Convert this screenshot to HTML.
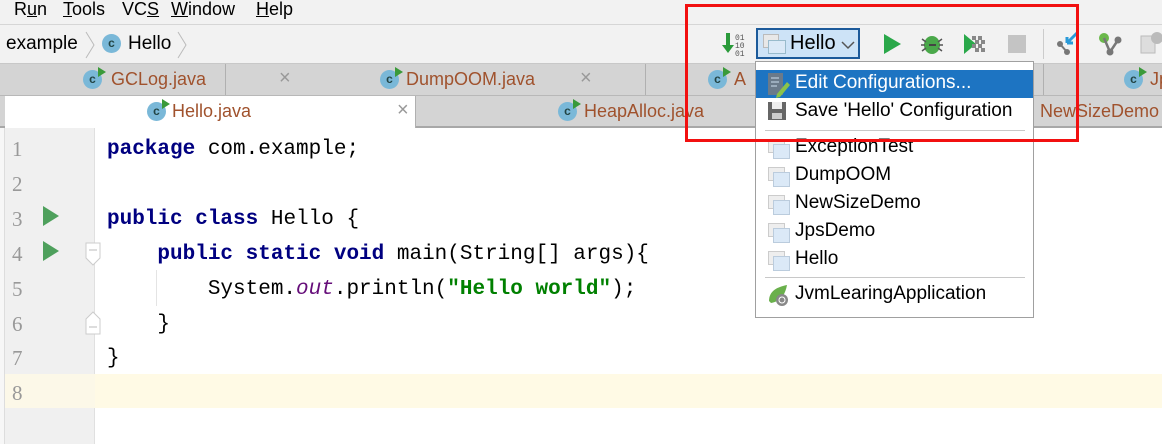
<!DOCTYPE html>
<html><head><meta charset="utf-8">
<style>
*{margin:0;padding:0;box-sizing:border-box}
body{width:1162px;height:444px;overflow:hidden;background:#fff;font-family:"Liberation Sans","Noto Sans CJK SC",sans-serif;position:relative;color:#000}
.abs{position:absolute}
.menu{top:0;left:0;width:1162px;height:25px;background:#f2f2f2;border-bottom:1px solid #d6d6d6;font-size:18px}
.menu span{position:absolute;top:-1px}
.nav{top:25px;left:0;width:1162px;height:39px;background:#f2f2f2;border-bottom:1px solid #c8c8c8}
.cicon{display:inline-block;width:19px;height:19px;border-radius:50%;background:#7ab8d8;color:#244;font-size:12px;text-align:center;line-height:19px;font-weight:bold;position:relative}
.cicon.run::after{content:"";position:absolute;right:-4px;top:-3px;border-left:8px solid #3a9a3a;border-top:5px solid transparent;border-bottom:5px solid transparent}
.tabs1{top:64px;left:0;width:1162px;height:32px;background:#d4d4d4;border-bottom:1px solid #b8b8b8}
.tabs2{top:96px;left:0;width:1162px;height:32px;background:#d4d4d4;border-bottom:2px solid #a8a8a8}
.tab{position:absolute;top:0;height:31px;border-right:1px solid #b0b0b0;font-size:18px;color:#a0522d}
.tab .lbl{position:absolute;top:5px}
.tab .x{position:absolute;top:3px;color:#999;font-size:20px}
.gutter{top:128px;left:0;width:95px;height:316px;background:#f0f0f0;border-right:1px solid #e0e0e0}
.ln{position:absolute;left:12px;font-family:"Liberation Serif",serif;font-size:21px;color:#999}
.code{font-family:"Liberation Mono",monospace;font-size:21px;position:absolute;white-space:pre;color:#000}
.kw{color:#000080;font-weight:bold}
.str{color:#008000;font-weight:bold}
.fld{color:#660e7a;font-style:italic}
.play{position:absolute;left:43px;border-left:16px solid #4ea05c;border-top:10px solid transparent;border-bottom:10px solid transparent}
.popup{top:61px;left:755px;width:279px;height:257px;background:#fff;border:1px solid #a0a0a0;font-size:19px}
.item{position:absolute;left:0;width:277px;height:28px}
.item .t{position:absolute;left:39px;top:2px}
.cfg{position:absolute;left:12px;top:5px;width:20px;height:18px}
.cfg::before{content:"";position:absolute;left:0;top:0;width:15px;height:12px;border:1px solid #ccc;background:#eee}
.cfg::after{content:"";position:absolute;left:5px;top:5px;width:15px;height:13px;border:1px solid #bcd;background:#dbe9f7}
.sep{position:absolute;left:9px;width:260px;height:1px;background:#c8c8c8}
</style></head><body>
<div class="abs menu">
 <span style="left:14px">R<u>u</u>n</span>
 <span style="left:63px"><u>T</u>ools</span>
 <span style="left:122px">VC<u>S</u></span>
 <span style="left:171px"><u>W</u>indow</span>
 <span style="left:256px"><u>H</u>elp</span>
</div>
<div class="abs nav">
 <span class="abs" style="left:6px;top:8px;font-size:19px">example</span>
 <svg class="abs" style="left:84px;top:6px" width="12" height="28"><path d="M2 1 L10 14 L2 27" fill="none" stroke="#bbb"/></svg>
 <span class="abs cicon" style="left:102px;top:9px">c</span>
 <span class="abs" style="left:128px;top:8px;font-size:19px">Hello</span>
 <svg class="abs" style="left:176px;top:6px" width="12" height="28"><path d="M2 1 L10 14 L2 27" fill="none" stroke="#bbb"/></svg>
 <svg class="abs" style="left:720px;top:6px" width="28" height="26"><path d="M8 2v16" stroke="#2a9a3a" stroke-width="4"/><path d="M2 14l6 8 6-8z" fill="#2a9a3a"/><text x="15" y="9" font-size="8" font-family="Liberation Mono" fill="#555">01</text><text x="15" y="17" font-size="8" font-family="Liberation Mono" fill="#555">10</text><text x="15" y="25" font-size="8" font-family="Liberation Mono" fill="#555">01</text></svg>
 <div class="abs" style="left:756px;top:3px;width:104px;height:31px;background:#cde3f7;border:2px solid #1c5a9a">
  <div class="abs" style="left:5px;top:4px;width:16px;height:14px;border:1px solid #bbb;background:#e8e8e8"></div>
  <div class="abs" style="left:10px;top:10px;width:18px;height:14px;border:1px solid #9bc;background:#dbe9f7"></div>
  <span class="abs" style="left:32px;top:2px;font-size:20px">Hello</span>
  <svg class="abs" style="left:83px;top:10px" width="14" height="10"><path d="M1 2l6 6 6-6" fill="none" stroke="#555" stroke-width="1.5"/></svg>
 </div>
 <svg class="abs" style="left:882px;top:8px" width="20" height="22"><path d="M2 1L19 11L2 21z" fill="#2aa84a"/></svg>
 <svg class="abs" style="left:919px;top:6px" width="26" height="26"><ellipse cx="13" cy="14" rx="8" ry="9" fill="#4aa84a"/><path d="M10 14h7" stroke="#444" stroke-width="2"/><path d="M3 8l4 3M3 20l4-3M23 8l-4 3M23 20l-4-3M2 14h4M20 14h4" stroke="#555" stroke-width="1.5"/></svg>
 <svg class="abs" style="left:962px;top:8px" width="26" height="22"><path d="M2 1L14 11L2 21z" fill="#2aa84a"/><g fill="#888"><rect x="10" y="3" width="4" height="4"/><rect x="16" y="3" width="4" height="4"/><rect x="13" y="7" width="4" height="4"/><rect x="19" y="7" width="4" height="4"/><rect x="10" y="11" width="4" height="4"/><rect x="16" y="11" width="4" height="4"/><rect x="13" y="15" width="4" height="4"/><rect x="19" y="15" width="4" height="4"/></g></svg>
 <div class="abs" style="left:1008px;top:10px;width:18px;height:18px;background:#c4c4c4"></div>
 <div class="abs" style="left:1043px;top:4px;width:1px;height:30px;background:#ccc"></div>
 <svg class="abs" style="left:1055px;top:6px" width="26" height="26"><circle cx="5" cy="13" r="3" fill="#777"/><circle cx="12" cy="21" r="3" fill="#777"/><path d="M5 13L12 21" stroke="#777" stroke-width="2"/><path d="M22 2L12 12M12 12v-6M12 12h6" stroke="#2a9ad8" stroke-width="3" fill="none"/></svg>
 <svg class="abs" style="left:1097px;top:6px" width="28" height="26"><circle cx="7" cy="7" r="5" fill="#6ab84a"/><circle cx="21" cy="9" r="3.5" fill="#777"/><circle cx="13" cy="21" r="3.5" fill="#777"/><path d="M7 7L13 21L21 9" stroke="#777" stroke-width="2.5" fill="none"/></svg>
 <svg class="abs" style="left:1140px;top:6px" width="22" height="26"><rect x="1" y="5" width="14" height="17" fill="#ddd" stroke="#bbb"/><circle cx="17" cy="7" r="6" fill="#bbb"/></svg>
</div>
<div class="abs tabs1">
 <div class="tab" style="left:5px;width:221px"><span class="cicon run" style="position:absolute;left:78px;top:6px">c</span><span class="lbl" style="left:106px">GCLog.java</span><span class="x" style="left:274px">×</span></div>
 <div class="tab" style="left:226px;width:420px"><span class="cicon run" style="position:absolute;left:154px;top:6px">c</span><span class="lbl" style="left:180px">DumpOOM.java</span><span class="x" style="left:354px">×</span></div>
 <div class="tab" style="left:646px;width:398px"><span class="cicon run" style="position:absolute;left:62px;top:6px">c</span><span class="lbl" style="left:88px">A</span></div>
 <div class="tab" style="left:1044px;width:130px;border:none"><span class="cicon run" style="position:absolute;left:80px;top:6px">c</span><span class="lbl" style="left:106px">Jp</span></div>
</div>
<div class="abs tabs2">
 <div class="tab" style="left:5px;width:411px;background:#fff;height:32px"><span class="cicon run" style="position:absolute;left:142px;top:6px">c</span><span class="lbl" style="left:167px">Hello.java</span><span class="x" style="left:392px">×</span></div>
 <div class="tab" style="left:416px;width:620px;border:none"><span class="cicon run" style="position:absolute;left:142px;top:6px">c</span><span class="lbl" style="left:168px">HeapAlloc.java</span><span class="lbl" style="left:624px">NewSizeDemo</span></div>
</div>
<div class="abs" style="left:0;top:374px;width:1162px;height:34px;background:#fffae5"></div>
<div class="abs gutter"></div>
<div class="abs" style="left:0;top:374px;width:95px;height:34px;background:#fcf8e8"></div>
<div class="abs" style="left:0;top:128px;width:5px;height:316px;background:#f7f7f7;border-right:1px solid #ddd"></div>
<div class="ln" style="top:137px">1</div><div class="ln" style="top:172px">2</div><div class="ln" style="top:207px">3</div><div class="ln" style="top:242px">4</div><div class="ln" style="top:277px">5</div><div class="ln" style="top:312px">6</div><div class="ln" style="top:346px">7</div><div class="ln" style="top:381px">8</div>
<div class="play" style="top:206px"></div><div class="play" style="top:241px"></div>
<svg class="abs" style="left:85px;top:242px" width="20" height="26"><path d="M1 1h14v15l-7 7-7-7z" fill="#fff" stroke="#ccc"/><path d="M4 8h8" stroke="#bbb"/></svg>
<svg class="abs" style="left:85px;top:309px" width="20" height="26"><path d="M1 25h14v-15l-7-7-7 7z" fill="#fff" stroke="#ccc"/><path d="M4 18h8" stroke="#bbb"/></svg>
<div class="abs" style="left:156px;top:270px;width:1px;height:36px;background:#e4e4e4"></div>
<div class="code" style="left:107px;top:138px"><span class="kw">package</span> com.example;</div>
<div class="code" style="left:107px;top:208px"><span class="kw">public class</span> Hello {</div>
<div class="code" style="left:107px;top:243px">    <span class="kw">public static void</span> main(String[] args){</div>
<div class="code" style="left:107px;top:278px">        System.<span class="fld">out</span>.println(<span class="str">"Hello world"</span>);</div>
<div class="code" style="left:107px;top:313px">    }</div>
<div class="code" style="left:107px;top:347px">}</div>
<div class="abs popup">
 <div class="item" style="top:8px;background:#1d74c2;color:#fff"><svg style="position:absolute;left:11px;top:2px" width="24" height="26"><rect x="1" y="1" width="15" height="22" fill="#6a7a8a"/><path d="M4 6h8M4 10h8M4 14h6" stroke="#cde"/><path d="M10 22l10-12 3 3-10 12-4 1z" fill="#8bc34a"/></svg><span class="t">Edit Configurations...</span></div>
 <div class="item" style="top:36px"><svg style="position:absolute;left:12px;top:4px" width="20" height="20"><rect x="0" y="0" width="18" height="18" fill="#666"/><rect x="4" y="0" width="10" height="7" fill="#eee"/><rect x="4" y="11" width="10" height="6" fill="#ccc"/></svg><span class="t">Save 'Hello' Configuration</span></div>
 <div class="sep" style="top:68px"></div>
 <div class="item" style="top:72px"><span class="cfg"></span><span class="t">ExceptionTest</span></div>
 <div class="item" style="top:100px"><span class="cfg"></span><span class="t">DumpOOM</span></div>
 <div class="item" style="top:128px"><span class="cfg"></span><span class="t">NewSizeDemo</span></div>
 <div class="item" style="top:156px"><span class="cfg"></span><span class="t">JpsDemo</span></div>
 <div class="item" style="top:184px"><span class="cfg"></span><span class="t">Hello</span></div>
 <div class="sep" style="top:215px"></div>
 <div class="item" style="top:219px"><svg style="position:absolute;left:11px;top:2px" width="24" height="24"><path d="M2 18C2 8 10 4 20 2c-2 10-6 16-16 18z" fill="#6ab04c"/><circle cx="15" cy="17" r="6" fill="#888"/><circle cx="15" cy="17" r="3" fill="none" stroke="#fff"/></svg><span class="t">JvmLearingApplication</span></div>
</div>
<div class="abs" style="left:685px;top:4px;width:394px;height:138px;border:3px solid #f21010"></div>
</body></html>
